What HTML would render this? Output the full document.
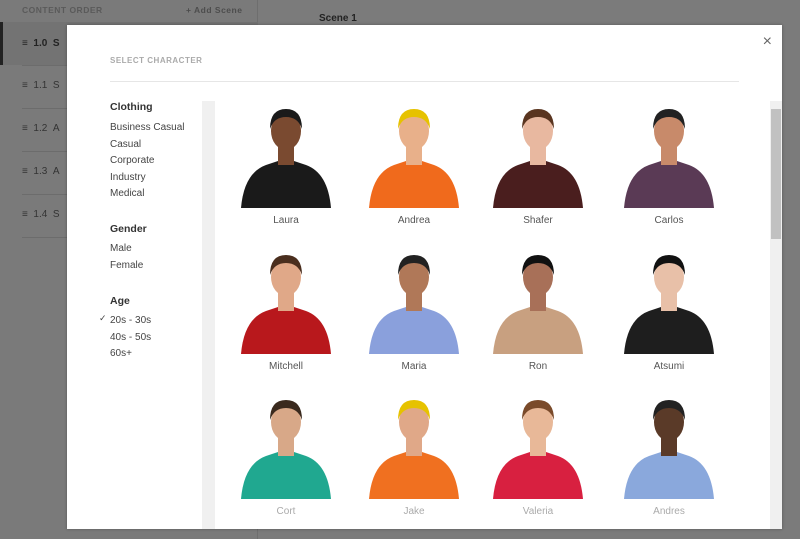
<!DOCTYPE html>
<html><head><style>
*{margin:0;padding:0;box-sizing:border-box}
body{width:800px;height:539px;overflow:hidden;background:#7b7b7b;font-family:"Liberation Sans",sans-serif;position:relative}
.side{position:absolute;left:0;top:0;width:258px;height:539px;background:#7a7a7a;border-right:1px solid #6e6e6e}
.hdr{position:absolute;top:5px;font-size:8.5px;font-weight:bold;color:#5a5a5a;letter-spacing:.5px}
.row{position:absolute;left:22px;width:236px;border-top:1px solid #6c6c6c;font-size:10px;color:#333}
.sel{position:absolute;left:0;top:22px;width:258px;height:43px;background:#737373;border-left:3px solid #222}
.modal{position:absolute;left:67px;top:25px;width:715px;height:504px;background:#fff;box-shadow:0 0 3px rgba(0,0,0,.3)}
.f{position:absolute;font-size:10px;color:#444}
.fh{font-weight:bold;color:#333;font-size:10.5px}
.card{position:absolute;width:120px;text-align:center;font-size:10px;color:#555}
.card svg{display:block;margin:0 auto}
.card div{margin-top:7px}
</style></head><body>
<div class="side">
<div class="hdr" style="left:22px">CONTENT ORDER</div>
<div class="hdr" style="left:186px;color:#4d4d4d">+ Add Scene</div>
<div class="sel"></div>
<div style="position:absolute;left:22px;top:38px;font-size:10px;font-weight:bold;color:#222">≡ &nbsp;1.0 &nbsp;S</div>
<div class="row" style="top:65px;height:43px;padding-top:14px">≡ &nbsp;1.1 &nbsp;S</div>
<div class="row" style="top:108px;height:43px;padding-top:14px">≡ &nbsp;1.2 &nbsp;A</div>
<div class="row" style="top:151px;height:43px;padding-top:14px">≡ &nbsp;1.3 &nbsp;A</div>
<div class="row" style="top:194px;height:43px;padding-top:14px">≡ &nbsp;1.4 &nbsp;S</div>
<div class="row" style="top:237px"></div>
</div>
<div style="position:absolute;left:319px;top:13px;font-size:10px;font-weight:bold;color:#222">Scene 1</div>
<div class="modal">
<div style="position:absolute;left:43px;top:31px;font-size:8px;font-weight:bold;color:#aaa;letter-spacing:.5px">SELECT CHARACTER</div>
<div style="position:absolute;left:43px;top:56px;width:629px;height:1px;background:#e6e6e6"></div>
<div style="position:absolute;right:10px;top:8px;font-size:16px;color:#666">×</div>
<div class="f fh" style="left:43px;top:76px">Clothing</div>
<div class="f" style="left:43px;top:95px;line-height:16.5px">Business Casual<br>Casual<br>Corporate<br>Industry<br>Medical</div>
<div class="f fh" style="left:43px;top:198px">Gender</div>
<div class="f" style="left:43px;top:216px;line-height:16.5px">Male<br>Female</div>
<div class="f fh" style="left:43px;top:270px">Age</div>
<div class="f" style="left:32px;top:288px;font-size:9px">✓</div>
<div class="f" style="left:43px;top:288px;line-height:16.5px">20s - 30s<br>40s - 50s<br>60s+</div>
<div style="position:absolute;left:135px;top:76px;width:13px;height:428px;background:#f0f0f0"></div>
<div style="position:absolute;left:703px;top:76px;width:12px;height:428px;background:#f0f0f0"><div style="margin:8px 1px;height:130px;background:#c1c1c1"></div></div>
</div>
<div id="g"></div>
<script>
const P=[["Laura","#1a1a1a","#7a4a30","#1a1a1a"],["Andrea","#f06a1c","#e8b08a","#e6c200"],["Shafer","#4a1e1e","#e8b8a0","#5a3520"],["Carlos","#5a3a55","#c88a6a","#222"],
["Mitchell","#b8181c","#e0a888","#4a2e1e"],["Maria","#8aa0dc","#b07858","#222"],["Ron","#c8a080","#a87058","#111"],["Atsumi","#1e1e1e","#e8c0a8","#111"],
["Cort","#20a890","#d8a888","#3a2a1e"],["Jake","#f07020","#e0a888","#e6c200"],["Valeria","#d82040","#e8b898","#7a4a2a"],["Andres","#8aa8dc","#5a3a28","#222"]];
const xs=[286,414,538,669],ys=[101,247,392];let h="";
P.forEach((p,i)=>{const cx=xs[i%4],cy=ys[Math.floor(i/4)],c=i>=8;
h+=`<div class="card" style="left:${cx-60}px;top:${cy}px;color:${c?'#aaa':'#555'}"><svg width="100" height="107" viewBox="0 0 100 107">
<path d="M5 107 Q8 72 30 64 L42 60 L58 60 L70 64 Q92 72 95 107Z" fill="${p[1]}"/>
<rect x="42" y="44" width="16" height="20" fill="${p[2]}"/>
<ellipse cx="50" cy="30" rx="15" ry="19" fill="${p[2]}"/>
<path d="M34 28 Q34 8 50 8 Q66 8 66 28 Q62 16 50 16 Q38 16 34 28Z" fill="${p[3]}"/></svg><div>${p[0]}</div></div>`});
document.getElementById("g").innerHTML=h;
</script>
</body></html>
